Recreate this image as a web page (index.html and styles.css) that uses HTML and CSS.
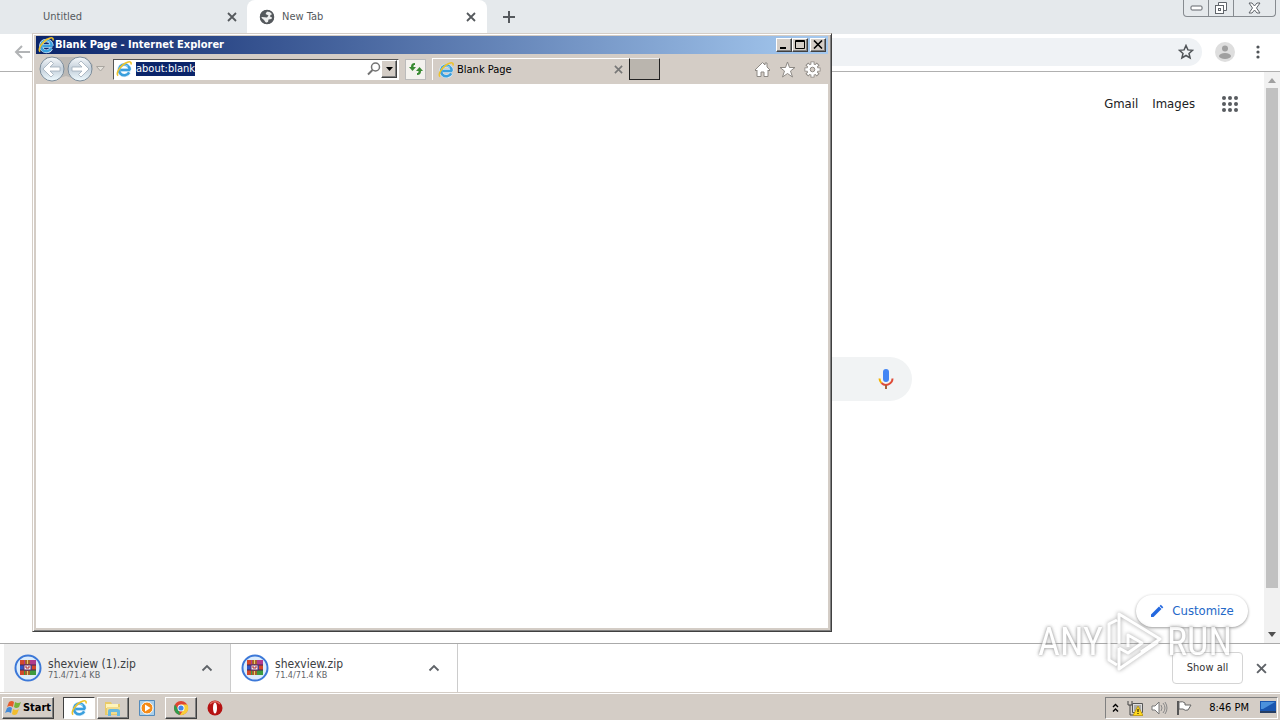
FILE: index.html
```html
<!DOCTYPE html>
<html lang="en">
<head>
<meta charset="utf-8">
<title>Desktop</title>
<link rel="stylesheet" href="styles.css">
</head>
<body>
<svg class="defs" width="0" height="0" aria-hidden="true">
  <symbol id="ie" viewBox="0 0 18 18">
    <path d="M15.300 10H5.500M14.200 12.400A5.400 5.400 0 1 1 14.800 9.800" fill="none" stroke="#d9eefb" stroke-width="3.600"/>
    <path d="M15.300 10H5.500M14.200 12.400A5.400 5.400 0 1 1 14.800 9.800" fill="none" stroke="#3a9fdd" stroke-width="2.500"/>
    <path d="M5 7.500A5 5 0 0 1 13 6.500" fill="none" stroke="#8ed6f7" stroke-width="1"/>
    <path d="M3 15.800C.5 13 6 4.500 12.500 2.200c2.800-1 4.200 0 3.500 2.300" fill="none" stroke="#edc22a" stroke-width="1.600"/>
  </symbol>
  <symbol id="close" viewBox="0 0 10 10"><path d="M1 1l8 8M9 1L1 9" fill="none" stroke="currentColor" stroke-width="1.800"/></symbol>
  <symbol id="chevron" viewBox="0 0 12 8"><path d="M1.500 6.500L6 2l4.500 4.500" fill="none" stroke="currentColor" stroke-width="1.800"/></symbol>
  <symbol id="archive" viewBox="0 0 28 28">
    <circle cx="14" cy="14" r="12.500" fill="#dcecfb" stroke="#3c78d8" stroke-width="2"/>
    <path fill="#b13a8c" d="M6 6h16v5H6z"/><path fill="#3155c4" d="M6 11h16v5H6z"/><path fill="#3c9a3e" d="M6 16h16v5H6z"/>
    <path fill="#d3472b" d="M6 6h4v5H6zM18 11h4v5h-4zM6 16h4v5H6z"/>
    <path fill="#a8622a" d="M11 6h5v15h-5z"/><path d="M6 11h16M6 16h16" stroke="#432655"/>
    <path fill="#eee" stroke="#68316d" d="M10 11h7v5h-7z"/><path d="M12 12v2h3v-2" fill="none" stroke="#b2222b"/>
    <path d="M13.500 6v4M13.500 17v4" stroke="#e6cf70"/>
  </symbol>
</svg>

<main class="browser">
  <header class="tabstrip">
    <div class="tab"><span class="tab-title">Untitled</span><button class="plain" aria-label="Close Untitled"><svg width="10" height="10"><use href="#close"/></svg></button></div>
    <div class="tab tab-active">
      <svg class="globe" width="16" height="16" viewBox="0 0 16 16"><circle cx="8" cy="8" r="7" fill="#55595d"/><path d="M8 2.500L6.500 5l3 1.500L8 8.500 3 8l-1 .5 3 2.500 2 3 2-1 .5-2.500 3-.5.5-1.500-2-1 .5-1.500 2-1-2-2.500z" fill="#fff" opacity=".9"/><circle cx="8" cy="8" r="6.500" fill="none" stroke="#55595d" stroke-width="1.500"/></svg>
      <span class="tab-title">New Tab</span><button class="plain" aria-label="Close New Tab"><svg width="10" height="10"><use href="#close"/></svg></button>
    </div>
    <button class="plain new-tab" aria-label="New tab"><svg width="12" height="12" viewBox="0 0 12 12"><path d="M6 0v12M0 6h12" stroke="#55595d" stroke-width="2"/></svg></button>
    <div class="caption-buttons">
      <button aria-label="Minimize"><svg width="13" height="6" viewBox="0 0 13 6"><rect x="1" y="1" width="11" height="4" rx="1" fill="#fff" stroke="#60656b"/></svg></button>
      <button aria-label="Restore"><svg width="14" height="14" viewBox="0 0 14 14"><path d="M4.500 4V1.500h8v8H10" fill="#fff" stroke="#60656b"/><rect x="1.500" y="4.500" width="8" height="8" fill="#fff" stroke="#60656b"/><rect x="4.500" y="7.500" width="2" height="2" fill="none" stroke="#60656b"/></svg></button>
      <button class="caption-close" aria-label="Close"><svg width="13" height="12" viewBox="0 0 13 12"><path d="M1 1h3l2.500 3L9 1h3L8.500 6l3.500 5H9L6.500 8 4 11H1l3.500-5z" fill="#fff" stroke="#60656b"/></svg></button>
    </div>
  </header>
  <div class="toolbar">
    <button class="plain" aria-label="Back"><svg width="16" height="14" viewBox="0 0 16 14"><path d="M16 7H2M8 1L2 7l6 6" fill="none" stroke="#b2b4b6" stroke-width="2"/></svg></button>
    <div class="omnibox"><button class="plain" aria-label="Bookmark"><svg width="16" height="16" viewBox="0 0 16 16"><path d="M8 1.500l1.900 4.400 4.700.4L11 9.400l1.100 4.600L8 11.500 3.900 14 5 9.400 1.400 6.300l4.700-.4z" fill="none" stroke="#505458" stroke-width="1.500"/></svg></button></div>
    <button class="plain" aria-label="Profile"><svg width="20" height="20" viewBox="0 0 20 20"><circle cx="10" cy="10" r="10" fill="#dedede"/><circle cx="10" cy="6.500" r="3" fill="#a0a0a0"/><ellipse cx="10" cy="14" rx="6" ry="3" fill="#a0a0a0"/></svg></button>
    <button class="plain" aria-label="Menu"><svg width="4" height="14" viewBox="0 0 4 14" fill="#505458"><circle cx="2" cy="2" r="1.600"/><circle cx="2" cy="7" r="1.600"/><circle cx="2" cy="12" r="1.600"/></svg></button>
  </div>
  <div class="viewport">
    <div class="page">
      <nav class="page-nav"><a href="#">Gmail</a><a href="#">Images</a>
        <button class="plain apps" aria-label="Apps"><svg width="16" height="16" viewBox="0 0 16 16" fill="#585c60"><circle cx="2" cy="2" r="2"/><circle cx="8" cy="2" r="2"/><circle cx="14" cy="2" r="2"/><circle cx="2" cy="8" r="2"/><circle cx="8" cy="8" r="2"/><circle cx="14" cy="8" r="2"/><circle cx="2" cy="14" r="2"/><circle cx="8" cy="14" r="2"/><circle cx="14" cy="14" r="2"/></svg></button>
      </nav>
      <div class="search"><button class="plain" aria-label="Voice search"><svg width="16" height="22" viewBox="0 0 16 22"><rect x="5" y="1" width="6" height="13" rx="3" fill="#4285f4"/><path d="M1.500 10.500a6.500 6.500 0 0 0 2 4.500" fill="none" stroke="#f4b400" stroke-width="2"/><path d="M3.500 15a6.500 6.500 0 0 0 11-4.500" fill="none" stroke="#df4b37" stroke-width="2"/><path d="M8 17v4" stroke="#a6613a" stroke-width="2"/></svg></button></div>
      <button class="customize"><svg width="14" height="14" viewBox="0 0 14 14"><path d="M1 10.500L9 2.500 11.500 5l-8 8H1zM9.600 1.900l1.200-1.200 2.500 2.500-1.200 1.200z" fill="#2468df"/></svg>Customize</button>
    </div>
    <div class="scrollbar" aria-hidden="true"><svg width="8" height="5" viewBox="0 0 8 5"><path d="M0 5l4-5 4 5z" fill="#a0a0a0"/></svg><i class="thumb"></i><svg width="8" height="5" viewBox="0 0 8 5"><path d="M0 0l4 5 4-5z" fill="#505050"/></svg></div>
  </div>
  <footer class="downloads">
    <div class="download download-hover"><svg width="28" height="28"><use href="#archive"/></svg><div><div class="file">shexview (1).zip</div><div class="size">71.4/71.4 KB</div></div><button class="plain" aria-label="Options for shexview (1).zip"><svg width="12" height="8"><use href="#chevron"/></svg></button></div>
    <div class="download"><svg width="28" height="28"><use href="#archive"/></svg><div><div class="file">shexview.zip</div><div class="size">71.4/71.4 KB</div></div><button class="plain" aria-label="Options for shexview.zip"><svg width="12" height="8"><use href="#chevron"/></svg></button></div>
    <button class="show-all">Show all</button>
    <button class="plain" aria-label="Close downloads"><svg width="11" height="11"><use href="#close"/></svg></button>
  </footer>
</main>

<section class="ie-window" aria-label="Internet Explorer">
  <header class="ie-title"><svg width="18" height="18"><use href="#ie"/></svg><h1>Blank Page - Internet Explorer</h1>
    <div class="ie-caption">
      <button aria-label="Minimize"><svg width="10" height="9" viewBox="0 0 10 9"><path d="M1 7h6v2H1z"/></svg></button>
      <button aria-label="Maximize"><svg width="10" height="9" viewBox="0 0 10 9"><path d="M.5.5h9v8h-9zM0 1.500h10" fill="none" stroke="#000"/></svg></button>
      <button class="ie-close" aria-label="Close"><svg width="10" height="9" viewBox="0 0 10 9"><path d="M1 .5l8 8M9 .5l-8 8" stroke="#000" stroke-width="1.600"/></svg></button>
    </div>
  </header>
  <div class="ie-bar">
    <div class="travel">
      <svg width="56" height="26" viewBox="0 0 56 26"><defs><linearGradient id="orb" x2="0" y2="1"><stop offset="0" stop-color="#f6f9fb"/><stop offset=".5" stop-color="#c3cfda"/><stop offset="1" stop-color="#f0fbff"/></linearGradient></defs><path d="M8 1h40l7 8-2 10-10 6-15-5-15 5-11-8z" fill="#bbb8b4"/><g fill="url(#orb)" stroke="#7d8d9b"><circle cx="14" cy="13" r="12"/><circle cx="42" cy="13" r="12"/></g><g fill="#fff" stroke="#9eacb9" stroke-width=".8"><path d="M5 13l8-8 2.500 2.500-3.500 3.500h10v4H12l3.500 3.500L13 21z"/><path d="M51 13l-8-8-2.500 2.500L44 11H34v4h10l-3.500 3.500L43 21z"/></g></svg>
      <svg width="9" height="6" viewBox="0 0 9 6"><path d="M.5.500h8l-4 4.500z" fill="#e5e2dc" stroke="#aaa6a0"/></svg>
    </div>
    <div class="address"><svg width="18" height="18"><use href="#ie"/></svg><input type="text" value="about:blank" aria-label="Address">
      <button class="plain find" aria-label="Search"><svg width="14" height="14" viewBox="0 0 14 14"><circle cx="8.500" cy="5" r="4" fill="none" stroke="#737373" stroke-width="1.500"/><path d="M5.500 8L1 12.500" stroke="#737373" stroke-width="2"/></svg></button>
      <button class="drop" aria-label="Address list"><svg width="7" height="4" viewBox="0 0 7 4"><path d="M0 0h7L3.500 4z"/></svg></button></div>
    <button class="refresh" aria-label="Refresh"><svg width="16" height="14" viewBox="0 0 16 14" fill="#398a32"><path d="M7 1C4 1 3 2.500 3 5H1l3.500 4L8 5H5.500c0-1.500 0-2 1.500-2zM9 13c3 0 4-1.500 4-4h2l-3.500-4L8 9h2.500c0 1.500 0 2-1.500 2z"/></svg></button>
    <div class="ie-tab"><svg width="18" height="18"><use href="#ie"/></svg><span>Blank Page</span><button class="plain" aria-label="Close tab"><svg width="9" height="9"><use href="#close"/></svg></button></div>
    <button class="ie-new" aria-label="New tab"></button>
    <div class="ie-tools">
      <button class="plain" aria-label="Home"><svg width="17" height="17" viewBox="0 0 17 17"><path d="M1 9l7.500-7.500L11 4V2h2v4l3 3-1 1-1-1v6.500h-4V11H7v4.500H3V9l-1 1z" fill="#fff" stroke="#8d8984"/></svg></button>
      <button class="plain" aria-label="Favorites"><svg width="17" height="17" viewBox="0 0 17 17"><path d="M8.500 1l2 5.500H16l-4.500 3.500 2 6-5-3.500-5 3.500 2-6L1 6.500h5.500z" fill="#fff" stroke="#8d8984"/></svg></button>
      <button class="plain" aria-label="Tools"><svg width="17" height="17" viewBox="0 0 17 17"><path d="M8.500.5v16M.5 8.500h16M2.800 2.800l11.400 11.400M14.200 2.800L2.800 14.200" stroke="#8d8984" stroke-width="4"/><circle cx="8.500" cy="8.500" r="6" fill="#8d8984"/><path d="M8.500 1.300v14.400M1.300 8.500h14.400M3.500 3.500l10 10M13.500 3.500l-10 10" stroke="#fff" stroke-width="2.300"/><circle cx="8.500" cy="8.500" r="5.200" fill="#fff"/><circle cx="8.500" cy="8.500" r="2.300" fill="#d4cdc6" stroke="#8d8984"/></svg></button>
    </div>
  </div>
  <div class="ie-document"></div>
</section>

<footer class="taskbar">
  <button class="start"><svg width="18" height="16" viewBox="0 0 18 16"><path d="M4 2q3-2 5 0L8 7Q5 5 2 7z" fill="#e65c2c"/><path d="M10 2q3 2 6 0l-2 5q-3 2-5 0z" fill="#77b43c"/><path d="M2 8q3-2 5 0l-1 5q-3-2-6 0z" fill="#438ad8"/><path d="M8 9q3 2 6 0l-2 5q-3 2-5 0z" fill="#f2bd2e"/></svg>Start</button>
  <div class="tasks">
    <button class="task pressed" aria-label="Internet Explorer"><svg width="18" height="18"><use href="#ie"/></svg></button>
    <button class="task raised" aria-label="Explorer"><svg width="18" height="18" viewBox="0 0 18 18"><path d="M1 3h6l1 2h8v11H1z" fill="#e9ca68"/><path d="M2 5h12v4H2z" fill="#fff4ba"/><path d="M3 8h13v7H3z" fill="#f1dc8e"/><path d="M4 17v-5q0-2 2-2h7q3 0 3 2v5h-3v-4H7v4z" fill="#68b9df"/></svg></button>
    <button class="task" aria-label="Media Player"><svg width="18" height="18" viewBox="0 0 18 18"><path d="M1.500 1.500h15v15h-15z" fill="#a9cfea" stroke="#548bbc"/><circle cx="9" cy="9" r="6" fill="#f58b18" stroke="#fff"/><path d="M7 5.500L12.500 9 7 12.500z" fill="#fff"/></svg></button>
    <button class="task raised" aria-label="Chrome"><svg width="16" height="16" viewBox="0 0 16 16"><circle cx="8" cy="8" r="7" fill="#e04532"/><path d="M2 4.500L6 11l1 4A7 7 0 0 1 2 4.500z" fill="#2e9c4b"/><path d="M8 4.500h6.200A7 7 0 0 1 7 15l4-6z" fill="#f8cf38"/><circle cx="8" cy="8" r="3.500" fill="#fff"/><circle cx="8" cy="8" r="2.600" fill="#4287e8"/></svg></button>
    <button class="task" aria-label="Opera"><svg width="16" height="16" viewBox="0 0 16 16"><circle cx="8" cy="8" r="7.500" fill="#b51212"/><path d="M3 4q5-5 10 0" fill="none" stroke="#e06a60" stroke-width="1.500"/><ellipse cx="8" cy="8" rx="2" ry="5.500" fill="#fff"/></svg></button>
  </div>
  <div class="tray">
    <svg width="7" height="10" viewBox="0 0 7 10"><path d="M1 4l2.500-2.500L6 4M1 8.500L3.500 6 6 8.500" fill="none" stroke="#000" stroke-width="1.400"/></svg>
    <svg width="16" height="16" viewBox="0 0 16 16"><path d="M1 1v4h4V1M3 5v10h3" fill="none" stroke="#444"/><path d="M5.500 3.500h10v9h-10z" fill="#ddd" stroke="#555"/><path d="M7 5h7v6H7z" fill="#aaa"/><path d="M11 6l5 9.500H6z" fill="#ffd91d" stroke="#b28a00" stroke-width=".7"/><path d="M11 9v3M11 13v1" stroke="#000"/></svg>
    <svg width="17" height="14" viewBox="0 0 17 14"><path d="M1 5h3l4-4v12L4 9H1z" fill="#fff" stroke="#777"/><path d="M10 4q2 3 0 6M12 2q4 5 0 10M14 1q4 6 0 12" fill="none" stroke="#888"/></svg>
    <svg width="17" height="16" viewBox="0 0 17 16"><path d="M2 1v14" stroke="#555" stroke-width="2"/><path d="M3 2q4-1 6 1v2h6l-3 5q-3 1-5-1H3z" fill="#fff" stroke="#666"/></svg>
    <time>8:46 PM</time>
    <svg width="16" height="13" viewBox="0 0 16 13"><path d="M0 0h16v10H0z" fill="#1a56af"/><path d="M1 1h14L3 8H1z" fill="#4c91dc"/><path d="M0 10h16v2H0z" fill="#263e63"/></svg>
  </div>
</footer>

<div class="watermark" aria-hidden="true"><span>ANY</span><svg width="60" height="64" viewBox="0 0 60 64"><g fill="none" stroke="#fff" stroke-width="3" stroke-linejoin="round"><path d="M14 34V4l41 25-19 13M12 10l-8 4v36l8 5"/><path d="M14 38v21l39-27M14 38l9 5 14-10-14-8v12"/></g></svg><span>RUN</span></div>
</body>
</html>
```

FILE: styles.css
```css
* { box-sizing: border-box; }
html, body { height: 100%; margin: 0; }
body { display: flex; flex-direction: column; position: relative; overflow: hidden; background: #fff; color: #000; font: 11px/14px "DejaVu Sans Condensed", "DejaVu Sans", sans-serif; }
button { font: inherit; color: inherit; padding: 0; margin: 0; border: 0; background: none; display: flex; align-items: center; justify-content: center; flex: none; }
svg { display: block; flex: none; }
.defs { position: absolute; }
.browser { flex: 1; min-height: 0; display: flex; flex-direction: column; }

.tabstrip { display: flex; flex: none; height: 34px; background: #e5e9ec; color: #55595d; }
.tab { width: 247px; display: flex; align-items: center; padding: 0 10px 0 43px; }
.tab-active { width: 240px; padding: 0 11px 0 12px; background: #fff; border-radius: 8px 8px 0 0; gap: 7px; }
.tab-title { flex: 1; }
.new-tab { margin-left: 16px; }
.caption-buttons { display: flex; height: 17px; margin: 0 4px 0 auto; border: 1px solid #868b90; border-top: 0; border-radius: 0 0 4px 4px; }
.caption-buttons button { width: 25px; border-right: 1px solid #868b90; }
.caption-buttons .caption-close { width: 41px; border: 0; }

.toolbar { flex: none; display: flex; align-items: center; height: 38px; padding: 0 20px 2px 14px; border-bottom: 1px solid #b0b0b0; }
.omnibox { flex: 1; height: 28px; margin: 0 13px 0 100px; padding-right: 8px; border-radius: 14px; background: #eff2f5; display: flex; align-items: center; justify-content: flex-end; }
.toolbar > button:last-child { margin-left: 21px; }

.viewport { flex: 1; min-height: 0; display: flex; }
.page { flex: 1; display: flex; flex-direction: column; padding: 24px 16px 16px; }
.page-nav { display: flex; align-items: center; justify-content: flex-end; gap: 14px; padding-right: 10px; font-size: 13px; line-height: 16px; }
.page-nav a { color: #202124; text-decoration: none; }
.apps { margin-left: 13px; }
.search { width: 560px; height: 44px; margin: 245px auto 0; border-radius: 22px; background: #f1f3f4; display: flex; align-items: center; justify-content: flex-end; padding-right: 18px; }
.customize { margin: auto 0 0 auto; width: 112px; height: 32px; gap: 8px; border-radius: 16px; box-shadow: 0 1px 3px #999; background: #fff; color: #2468c8; font-size: 13px; }
.scrollbar { width: 16px; background: #f1f1f1; display: flex; flex-direction: column; align-items: center; padding: 6px 0; }
.thumb { width: 12px; flex: 1; margin: 5px 0 44px; background: #c1c1c1; }

.downloads { flex: none; display: flex; align-items: center; height: 49px; border-top: 1px solid #aaa; padding: 0 13px 0 4px; color: #5f6368; }
.download { width: 227px; height: 48px; display: flex; align-items: center; padding: 0 17px 0 10px; gap: 6px; border-right: 1px solid #ccc; }
.download-hover { background: #eee; }
.download div { flex: 1; }
.download .file { padding-top: 2px; font-size: 12px; line-height: 12px; color: #3c4043; }
.size { font-size: 9px; line-height: 10px; }
.show-all { width: 71px; height: 32px; margin: 0 13px 0 auto; border: 1px solid #d4d4d4; border-radius: 4px; color: #333; }

.ie-window { position: absolute; left: 32px; top: 33px; width: 800px; height: 599px; display: flex; flex-direction: column; padding: 2px 3px 3px; background: #d4cdc6; border: 1px solid; border-color: #d4cdc6 #404040 #404040 #d4cdc6; box-shadow: inset 1px 1px #fff, inset -1px -1px #808080; }
.ie-title { display: flex; align-items: center; height: 18px; padding: 0 2px 0 1px; background: linear-gradient(90deg, #0a246a, #a6caf0); color: #fff; }
.ie-title h1 { flex: 1; margin: 0; font: bold 11px/18px "DejaVu Sans Condensed", "DejaVu Sans", sans-serif; }
.ie-caption { display: flex; }
.ie-caption button, .drop, .start, .raised { background: #d4cdc6; border: 1px solid; border-color: #fff #404040 #404040 #fff; box-shadow: inset -1px -1px #808080; }
.ie-caption button { width: 16px; height: 14px; padding: 0 1px 1px 0; }
.ie-caption .ie-close { margin-left: 2px; }
.ie-bar { display: flex; align-items: center; height: 30px; padding: 0 7px 0 2px; }
.travel { display: flex; align-items: center; gap: 2px; width: 75px; }
.address { display: flex; align-items: center; width: 286px; height: 21px; padding: 0 1px; background: #fff; border: 1px solid; border-color: #555 #fff #fff #555; }
.address input { width: 59px; height: 14px; margin: 0 0 0 3px; padding: 0; border: 0; border-radius: 0; background: #0a246a; color: #fff; font: inherit; }
.find { margin-left: auto; }
.drop { width: 16px; height: 18px; }
.refresh { width: 21px; height: 21px; margin: 0 6px; border: 1px solid #bbb; background: #f4f2ee; }
.ie-tab { display: flex; align-items: center; width: 197px; height: 22px; padding: 0 6px 0 4px; gap: 2px; border: 1px solid #fff; border-width: 1px 0 0 1px; color: #000; }
.ie-tab span { flex: 1; }
.ie-tab button { color: #777; }
.ie-new { width: 31px; height: 22px; background: #bab5ae; border: 1px solid #222; border-top-color: #eee; }
.ie-tools { margin-left: auto; display: flex; gap: 8px; }
.ie-document { flex: 1; background: #fff; }

.taskbar { flex: none; display: flex; align-items: center; height: 28px; padding: 2px 2px 0; background: #d4cdc6; border-top: 1px solid #d4cdc6; box-shadow: inset 0 1px #fff; }
.start { height: 22px; width: 52px; font-weight: bold; }
.tasks { display: flex; margin-left: 9px; gap: 2px; }
.task { width: 32px; height: 22px; }
.pressed { background: #fff; border: 1px solid; border-color: #404040 #fff #fff #404040; }
.tray { display: flex; align-items: center; gap: 8px; height: 22px; margin-left: auto; padding: 0 1px 0 6px; border: 1px solid; border-color: #808080 #fff #fff #808080; }
.tray time { margin: 0 3px 0 8px; }

.watermark { position: absolute; right: 48px; bottom: 46px; display: flex; align-items: center; gap: 2px; color: #fff; opacity: .8; font: 38px/64px "Liberation Sans Narrow", "Roboto Condensed", "DejaVu Sans Condensed", sans-serif; text-shadow: 0 0 3px #888, 0 0 4px #aaa; pointer-events: none; }
.watermark svg { filter: drop-shadow(0 0 2px #888); }
```
